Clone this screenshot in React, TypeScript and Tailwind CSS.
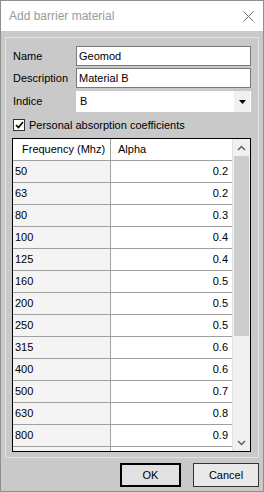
import React from "react";

const rows: [string, string][] = [
  ["50", "0.2"],
  ["63", "0.2"],
  ["80", "0.3"],
  ["100", "0.4"],
  ["125", "0.4"],
  ["160", "0.5"],
  ["200", "0.5"],
  ["250", "0.5"],
  ["315", "0.6"],
  ["400", "0.6"],
  ["500", "0.7"],
  ["630", "0.8"],
  ["800", "0.9"],
  ["", ""],
];

export default function App() {
  const font = { fontFamily: '"Liberation Sans", Arial, sans-serif' };
  return (
    <div
      className="w-[264px] h-[492px] flex flex-col bg-[#c9c9c9] border border-[#8e8e8e] text-[11px] text-black overflow-hidden"
      style={font}
    >
      {/* Title bar */}
      <div className="h-[30px] shrink-0 bg-white flex items-center justify-between pl-[8px] pr-[9px]">
        <span className="text-[12px] text-[#9a9a9a]">Add barrier material</span>
        <svg width="11" height="11" viewBox="0 0 11 11">
          <path d="M0.5 0.5 L10.5 10.5 M10.5 0.5 L0.5 10.5" stroke="#6e6e6e" strokeWidth="1" />
        </svg>
      </div>

      {/* Body */}
      <div className="flex-1 flex flex-col pt-[6px] px-[4px]">
        <div className="h-[421px] shrink-0 border border-[#e2e2e2] flex flex-col pl-[6px] pr-[7px] pt-[8px]">
          {/* Name */}
          <div className="flex items-center h-[20px]">
            <span className="w-[64px] pl-[1px]">Name</span>
            <div className="flex-1 h-[20px] bg-white border border-[#7a7a7a] flex items-center pl-[2px]">
              Geomod
            </div>
          </div>
          <div className="flex items-center h-[20px] mt-[2px]">
            <span className="w-[64px] pl-[1px]">Description</span>
            <div className="flex-1 h-[20px] bg-white border border-[#7a7a7a] flex items-center pl-[2px]">
              Material B
            </div>
          </div>
          <div className="flex items-center h-[21px] mt-[3px]">
            <span className="w-[64px] pl-[1px]">Indice</span>
            <div className="flex-1 h-[21px] bg-white flex items-center pl-[4px]">
              <span className="flex-1">B</span>
              <div className="w-[16px] h-[21px] bg-[#f0f0f0] flex items-center justify-center mr-[1px]">
                <svg width="7" height="4" viewBox="0 0 7 4">
                  <path d="M0 0 H7 L3.5 4 Z" fill="#000" />
                </svg>
              </div>
            </div>
          </div>

          {/* Checkbox */}
          <div className="flex items-center h-[14px] mt-[6px]">
            <div className="w-[12px] h-[12px] border border-[#333] bg-white flex items-center justify-center ml-[1px]">
              <svg width="9" height="8" viewBox="0 0 9 8">
                <path d="M1 4 L3.5 6.5 L8 1" stroke="#000" strokeWidth="1.6" fill="none" />
              </svg>
            </div>
            <span className="ml-[4px]">Personal absorption coefficients</span>
          </div>

          {/* Grid */}
          <div className="mt-[6px] h-[314px] border border-black flex overflow-hidden">
            <div className="w-[219px] flex flex-col overflow-hidden">
              <div className="h-[22px] shrink-0 flex bg-white border-b border-[#a0a0a0]">
                <div className="w-[98px] border-r border-[#a0a0a0] flex items-center pl-[9px]">
                  Frequency (Mhz)
                </div>
                <div className="flex-1 flex items-center pl-[7px]">Alpha</div>
              </div>
              {rows.map(([f, a], i) => (
                <div key={i} className="h-[22px] shrink-0 flex border-b border-[#a0a0a0]">
                  <div className="w-[98px] bg-[#f4f4f4] border-r border-[#a0a0a0] flex items-center pl-[2px]">
                    {f}
                  </div>
                  <div className="flex-1 bg-white flex items-center justify-end pr-[4px]">
                    {a}
                  </div>
                </div>
              ))}
            </div>
            {/* Scrollbar */}
            <div className="w-[1px] bg-[#e0e0e0]" />
            <div className="flex-1 bg-[#f0f0f0] flex flex-col">
              <div className="h-[17px] flex items-center justify-center">
                <svg width="9" height="6" viewBox="0 0 9 6">
                  <path d="M1 5 L4.5 1.5 L8 5" stroke="#606060" strokeWidth="1.5" fill="none" />
                </svg>
              </div>
              <div className="flex-1 flex flex-col px-[1px]">
                <div className="h-[180px] bg-[#cdcdcd]" />
              </div>
              <div className="h-[17px] flex items-center justify-center">
                <svg width="9" height="6" viewBox="0 0 9 6">
                  <path d="M1 1 L4.5 4.5 L8 1" stroke="#606060" strokeWidth="1.5" fill="none" />
                </svg>
              </div>
            </div>
          </div>
        </div>

        {/* Buttons */}
        <div className="flex justify-end mt-[5px]">
          <button className="w-[61px] h-[24px] border-2 border-black bg-[#e1e1e1] flex items-center justify-center text-[11px]">
            OK
          </button>
          <button className="w-[66px] h-[24px] ml-[12px] border border-[#333] bg-[#e9e9e9] flex items-center justify-center text-[11px]">
            Cancel
          </button>
        </div>
      </div>
    </div>
  );
}
